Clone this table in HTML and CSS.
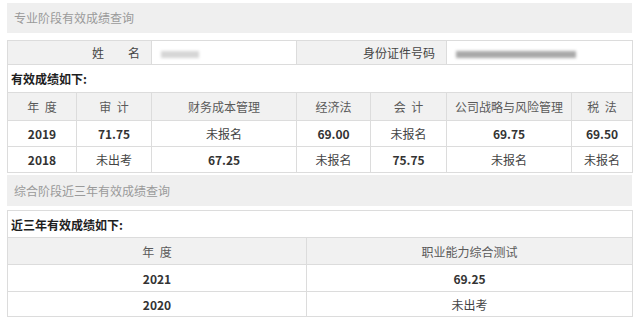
FILE: index.html
```html
<!DOCTYPE html>
<html lang="zh-CN">
<head>
<meta charset="utf-8">
<link rel="stylesheet" href="styles.css">
</head>
<body>
<div class="page">
  <div class="bar bar-first">专业阶段有效成绩查询</div>
  <table class="grid grid-pro">
    <colgroup>
      <col style="width:69px"><col style="width:75px"><col style="width:145px"><col style="width:74px"><col style="width:76px"><col style="width:125px"><col style="width:61px">
    </colgroup>
    <tr class="info">
      <td colspan="2" class="label">姓&emsp;&emsp;名</td>
      <td class="value"><span class="blur blur-name"></span></td>
      <td colspan="2" class="label">身份证件号码</td>
      <td colspan="2" class="value"><span class="blur blur-id"></span></td>
    </tr>
    <tr class="caption-row"><td colspan="7">有效成绩如下:</td></tr>
    <tr class="head">
      <td>年&nbsp;&nbsp;度</td><td>审&nbsp;&nbsp;计</td><td>财务成本管理</td><td>经济法</td><td>会&nbsp;&nbsp;计</td><td>公司战略与风险管理</td><td>税&nbsp;&nbsp;法</td>
    </tr>
    <tr class="data">
      <td class="num">2019</td><td class="num">71.75</td><td>未报名</td><td class="num">69.00</td><td>未报名</td><td class="num">69.75</td><td class="num">69.50</td>
    </tr>
    <tr class="data">
      <td class="num">2018</td><td>未出考</td><td class="num">67.25</td><td>未报名</td><td class="num">75.75</td><td>未报名</td><td>未报名</td>
    </tr>
  </table>
  <div class="bar bar-second">综合阶段近三年有效成绩查询</div>
  <table class="grid grid-comp">
    <colgroup><col style="width:299px"><col style="width:326px"></colgroup>
    <tr class="caption-row"><td colspan="2">近三年有效成绩如下:</td></tr>
    <tr class="head"><td>年&nbsp;&nbsp;度</td><td>职业能力综合测试</td></tr>
    <tr class="data"><td class="num">2021</td><td class="num">69.25</td></tr>
    <tr class="data last"><td class="num">2020</td><td>未出考</td></tr>
  </table>
</div>
</body>
</html>
```
FILE: styles.css
```css
html, body {
  margin: 0;
  padding: 0;
  background: #ffffff;
}
body {
  font-family: "Noto Sans CJK SC", "Microsoft YaHei", sans-serif;
  font-size: 12px;
  color: #333333;
}
.page {
  width: 625px;
  padding: 3px 0 0 7px;
}
.bar {
  height: 30px;
  line-height: 30px;
  background: #efefef;
  color: #9a9a9a;
  font-size: 12px;
  padding-left: 7px;
}
.bar-first { margin-bottom: 7px; }
.bar-second { margin: 2px 0 4px; height: 31px; line-height: 31px; }
.grid {
  width: 625px;
  border-collapse: collapse;
  table-layout: fixed;
}
.grid td {
  border: 1px solid #dcdcdc;
  height: 25px;
  padding: 0;
  text-align: center;
  vertical-align: middle;
  color: #444444;
  white-space: nowrap;
  overflow: hidden;
}
.info td { height: 23px; }
.info .label {
  background: #f1f1f1;
  text-align: right;
  padding-right: 11px;
  color: #444444;
}
.info .value {
  text-align: left;
  padding-left: 9px;
}
.blur {
  display: inline-block;
  vertical-align: middle;
  background: #b8b8b8;
  filter: blur(1.5px);
  height: 7px;
}
.blur-name { width: 38px; background: #d6d6d6; }
.blur-id { width: 120px; background: #a9a9a9; }
.caption-row td {
  text-align: left;
  font-weight: bold;
  color: #1e1e1e;
  padding-left: 3px;
  height: 26px;
}
.head td {
  background: #f1f1f1;
  color: #5a5a5a;
  height: 26px;
}
.grid-pro .caption-row td { height: 27px; }
.grid-pro .head td { height: 27px; }
.data td { height: 25px; }
.grid-comp .data td { height: 26px; }
.grid-comp .data.last td { height: 24px; }
.grid .num {
  font-weight: bold;
  color: #333333;
}
```
